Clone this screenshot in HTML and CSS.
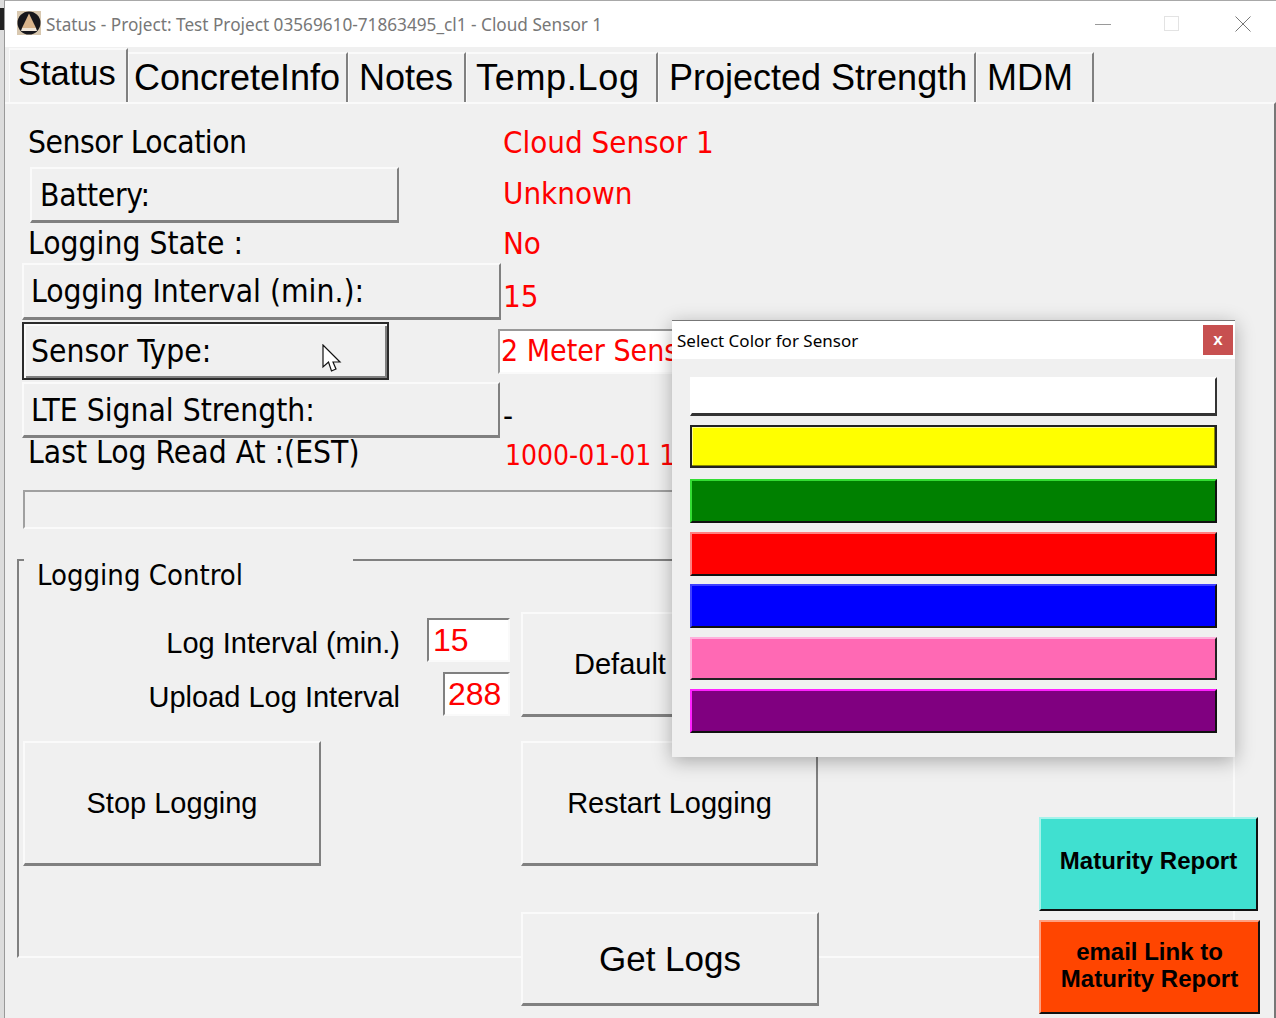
FILE: index.html
```html
<!DOCTYPE html>
<html lang="en">
<head>
    <meta charset="UTF-8" />
    <title>Status - Project: Test Project 03569610-71863495_cl1 - Cloud Sensor 1</title>
    <link rel="stylesheet" href="styles.css">
</head>
<body>
<div class="desktop-edge"><span class="edge-mark"></span></div>
<div class="window">

    <!-- Title bar -->
    <header class="titlebar">
        <svg class="app-icon" width="24" height="24" viewBox="0 0 24 24">
            <rect width="24" height="24" fill="#d8c8b0"/>
            <circle cx="12" cy="12" r="11.5" fill="#17171c"/>
            <path d="M12 2.5 L19 17 H5 Z" fill="#d9b48c"/>
            <path d="M5 17 H19 L20 20 H4 Z" fill="#f1e7da"/>
        </svg>
        <span class="title-text">Status - Project: Test Project 03569610-71863495_cl1 - Cloud Sensor 1</span>
        <div class="window-controls">
            <svg class="ctrl-min" width="18" height="16" viewBox="0 0 18 16"><path d="M1 8.5 H17" stroke="#9a9a9a" fill="none"/></svg>
            <svg width="16" height="16" viewBox="0 0 16 16"><rect x="0.5" y="0.5" width="14" height="14" stroke="#e3e3e3" fill="none"/></svg>
            <svg width="16" height="16" viewBox="0 0 16 16"><path d="M0.5 0.5 L15.5 15.5 M15.5 0.5 L0.5 15.5" stroke="#777" fill="none"/></svg>
        </div>
    </header>

    <!-- Tabs -->
    <nav class="tabs">
        <div class="tab tab-active tab-status">Status</div>
        <div class="tab tab-concrete">ConcreteInfo</div>
        <div class="tab tab-notes">Notes</div>
        <div class="tab tab-temp">Temp.Log</div>
        <div class="tab tab-projected">Projected Strength</div>
        <div class="tab tab-mdm">MDM</div>
    </nav>

    <main class="panel">

        <!-- Sensor status -->
        <section class="status-grid">
            <div class="row row-location">
                <div class="plain-label location-label">Sensor Location</div>
                <div class="value">Cloud Sensor 1</div>
            </div>
            <div class="row row-battery">
                <div class="raised-label battery-label">Battery:</div>
                <div class="value value-high">Unknown</div>
            </div>
            <div class="row row-state">
                <div class="plain-label">Logging State :</div>
                <div class="value">No</div>
            </div>
            <div class="row row-interval">
                <div class="raised-label interval-label">Logging Interval (min.):</div>
                <div class="value value-low">15</div>
            </div>
            <div class="row row-type">
                <div class="raised-label type-label">Sensor Type:
                    <svg class="cursor" width="20" height="29" viewBox="0 0 20 29">
                        <path d="M1 1 V23 L6.5 18 L9.5 27 L14 25 L11 18 H18 Z" fill="#fff" stroke="#111" stroke-width="1.2"/>
                    </svg>
                </div>
                <div class="type-field">2 Meter Sensor</div>
            </div>
            <div class="row row-signal">
                <div class="raised-label signal-label">LTE Signal Strength:</div>
                <div class="value value-low value-dash">-</div>
            </div>
            <div class="row row-read">
                <div class="plain-label">Last Log Read At :(EST)</div>
                <div class="value value-small">1000-01-01 12:00:00</div>
            </div>
        </section>

        <div class="progress-box"></div>

        <!-- Logging Control group -->
        <section class="group">
            <div class="group-title">Logging Control</div>
            <div class="group-body">
                <div class="col-left">
                    <div class="log-row">
                        <label class="log-label">Log Interval (min.)</label>
                        <div class="log-input input-wide">15</div>
                    </div>
                    <div class="log-row">
                        <label class="log-label">Upload Log Interval</label>
                        <div class="log-input input-narrow">288</div>
                    </div>
                    <button class="btn btn-stop">Stop Logging</button>
                </div>
                <div class="col-mid">
                    <button class="btn btn-default">Default</button>
                    <button class="btn btn-restart">Restart Logging</button>
                    <button class="btn btn-get">Get Logs</button>
                </div>
                <div class="col-right">
                    <button class="btn-report report-teal">Maturity Report</button>
                    <button class="btn-report report-orange">email Link to<br>Maturity Report</button>
                </div>
            </div>
        </section>
    </main>

    <!-- Color dialog -->
    <div class="dialog">
        <div class="dialog-title">
            <span>Select Color for Sensor</span>
            <button class="dialog-close">x</button>
        </div>
        <div class="dialog-body">
            <button class="swatch swatch-white"></button>
            <button class="swatch swatch-yellow"></button>
            <button class="swatch swatch-green"></button>
            <button class="swatch swatch-red"></button>
            <button class="swatch swatch-blue"></button>
            <button class="swatch swatch-pink"></button>
            <button class="swatch swatch-purple"></button>
        </div>
    </div>
</div>
</body>
</html>
```

FILE: styles.css
```css
html, body {
  margin: 0;
  padding: 0;
  height: 1018px;
  overflow: hidden;
  background: #f0f0f0;
  display: flex;
  font-family: "Liberation Sans", Arial, sans-serif;
  color: #000;
}

.desktop-edge {
  width: 4px;
  background: #dcdcdc;
  flex-shrink: 0;
}
.edge-mark {
  display: block;
  width: 4px;
  height: 22px;
  margin-top: 8px;
  background: #222;
}

.window {
  position: relative;
  width: 1272px;
  height: 1018px;
  box-sizing: border-box;
  border-left: 1px solid #999;
  background: #f0f0f0;
}

/* Title bar */
.titlebar {
  height: 47px;
  box-sizing: border-box;
  background: #fff;
  border-top: 1px solid #a8a8a8;
  display: flex;
  align-items: center;
  padding-left: 12px;
}
.app-icon {
  margin: -2px 5px 0 0;
}
.title-text {
  font-family: "Noto Sans", sans-serif;
  font-size: 17.2px;
  color: #777;
}
.window-controls {
  margin-left: auto;
  display: flex;
  align-items: center;
  gap: 55px;
  padding-right: 25px;
}
.ctrl-min {
  margin-right: -3px;
}

/* Tabs */
.tabs {
  height: 55px;
  box-sizing: border-box;
  display: flex;
  align-items: flex-end;
  padding-left: 4px;
}
.tab {
  height: 50px;
  box-sizing: border-box;
  border-top: 2px solid #fafafa;
  border-left: 1px solid #fafafa;
  border-right: 2px solid #808080;
  font-size: 36px;
  line-height: 48px;
  padding-left: 8px;
  white-space: nowrap;
}
.tab-active {
  height: 54px;
  line-height: 46px;
  font-size: 34.5px;
}
.tab-status { width: 119px; }
.tab-concrete { width: 220px; padding-left: 5px; }
.tab-notes { width: 118px; padding-left: 10px; }
.tab-temp { width: 192px; padding-left: 9px; letter-spacing: 0.7px; }
.tab-projected { width: 318px; padding-left: 10px; }
.tab-mdm { width: 118px; padding-left: 10px; }

/* Main panel */
.panel {
  height: 916px;
  box-sizing: border-box;
  border-top: 2px solid #fafafa;
  border-right: 2px solid #777;
  padding: 0 0 0 12px;
  overflow: visible;
}

.status-grid {
  width: 1100px;
  padding: 12px 0 0 5px;
}
.row {
  display: grid;
  grid-template-columns: 476px 1fr;
  align-items: center;
}
.row-location { height: 51px; }
.row-battery { height: 56px; }
.row-state { height: 40px; }
.row-interval { height: 57px; margin-bottom: 2px; }
.row-type { height: 58px; margin-bottom: 2px; }
.row-signal { height: 56px; }
.row-read { height: 34px; }

.plain-label {
  font-family: "DejaVu Sans", sans-serif;
  font-stretch: condensed;
  font-size: 31.5px;
  padding-left: 6px;
  white-space: nowrap;
}
.location-label {
  letter-spacing: -0.5px;
}
.row-read .plain-label {
  margin-top: -6px;
}
.raised-label {
  font-family: "DejaVu Sans", sans-serif;
  font-stretch: condensed;
  font-size: 31.5px;
  position: relative;
  height: 100%;
  box-sizing: border-box;
  display: flex;
  align-items: center;
  padding-left: 7px;
  background: #f0f0f0;
  border: 2px solid;
  border-bottom-width: 3px;
  border-color: #fafafa #808080 #808080 #fafafa;
  white-space: nowrap;
}
.battery-label { width: 369px; margin-left: 8px; padding-left: 8px; letter-spacing: -0.3px; }
.interval-label { width: 479px; }
.type-label {
  width: 367px;
  border-width: 2px;
  border-color: #2b2b2b;
  box-shadow: inset 2px 2px #fafafa, inset -2px -2px #808080;
}
.signal-label { width: 478px; }
.cursor {
  position: absolute;
  left: 298px;
  top: 20px;
}

.value {
  font-family: "DejaVu Sans", sans-serif;
  font-stretch: condensed;
  font-size: 31px;
  color: #f00;
  padding-left: 5px;
  white-space: nowrap;
}
.value-high {
  margin-top: -4px;
}
.value-low {
  padding-top: 9px;
}
.value-dash {
  color: #000;
}
.value-small {
  font-size: 28px;
  padding-left: 7px;
}
.type-field {
  font-family: "DejaVu Sans", sans-serif;
  font-stretch: condensed;
  font-size: 30px;
  color: #f00;
  background: #fff;
  width: 300px;
  height: 45px;
  line-height: 39px;
  box-sizing: border-box;
  border: 2px solid;
  border-color: #999 #fafafa #fafafa #999;
  padding-left: 1px;
  white-space: nowrap;
}

.progress-box {
  width: 1100px;
  height: 39px;
  box-sizing: border-box;
  margin: 18px 0 30px 6px;
  border: 2px solid;
  border-color: #a0a0a0 #fafafa #fafafa #a0a0a0;
}

/* Logging Control */
.group {
  width: 1218px;
  height: 399px;
  box-sizing: border-box;
  border: 2px solid;
  border-color: #808080 #fafafa #fafafa #808080;
}
.group-title {
  width: 316px;
  height: 32px;
  margin: -2px 0 0 5px;
  padding-left: 13px;
  background: #f0f0f0;
  font-family: "DejaVu Sans", sans-serif;
  font-stretch: condensed;
  font-size: 29px;
  line-height: 32px;
  white-space: nowrap;
}
.group-body {
  display: flex;
  align-items: flex-start;
  padding: 21px 0 0 4px;
}
.col-left {
  width: 498px;
  flex-shrink: 0;
  padding-top: 6px;
  box-sizing: border-box;
}
.col-mid {
  width: 298px;
  flex-shrink: 0;
  display: flex;
  flex-direction: column;
  gap: 24px;
}
.col-right {
  margin-left: 220px;
  flex-shrink: 0;
  padding-top: 205px;
  display: flex;
  flex-direction: column;
  gap: 9px;
}

.log-row {
  display: flex;
  align-items: center;
  height: 44px;
  width: 487px;
  margin-bottom: 10px;
}
.log-label {
  width: 377px;
  padding-top: 6px;
  text-align: right;
  font-size: 29px;
  white-space: nowrap;
}
.log-input {
  margin-left: auto;
  height: 44px;
  box-sizing: border-box;
  background: #fff;
  border: 2px solid;
  border-color: #808080 #fafafa #fafafa #808080;
  color: #f00;
  font-size: 32px;
  line-height: 40px;
  padding-left: 4px;
}
.input-wide { width: 83px; }
.input-narrow { width: 67px; padding-left: 3px; }

.btn {
  font-family: "Liberation Sans", Arial, sans-serif;
  background: #f0f0f0;
  color: #000;
  border: 2px solid;
  border-bottom-width: 3px;
  border-color: #fafafa #808080 #808080 #fafafa;
  font-size: 29px;
  padding: 0;
  display: block;
}
.btn-stop { width: 298px; height: 125px; margin-top: 25px; }
.btn-default {
  height: 105px;
  text-align: left;
  padding-left: 51px;
}
.btn-restart { height: 125px; width: 297px; }
.btn-get {
  height: 94px;
  margin-top: 22px;
  font-size: 35px;
}

.btn-report {
  font-family: "Liberation Sans", Arial, sans-serif;
  font-weight: bold;
  font-size: 24px;
  line-height: 27px;
  color: #000;
  height: 94px;
  width: 219px;
  padding: 0 0 4px;
  border: 2px solid;
}
.report-teal {
  padding-bottom: 8px;
  background: #40e0d0;
  border-color: #a5f3eb #111 #111 #a5f3eb;
}
.report-orange {
  background: #ff4500;
  border-color: #ffa080 #111 #111 #ffa080;
  width: 221px;
}

/* Color dialog */
.dialog {
  position: absolute;
  left: 667px;
  top: 320px;
  width: 563px;
  height: 437px;
  background: #f0f0f0;
  box-shadow: 0 4px 18px rgba(0, 0, 0, 0.3);
  border-top: 1px solid #777;
  box-sizing: border-box;
}
.dialog-title {
  height: 38px;
  background: #fff;
  display: flex;
  align-items: center;
  justify-content: space-between;
  font-family: "Noto Sans", sans-serif;
  font-size: 17px;
  padding-left: 5px;
  padding-right: 2px;
}
.dialog-close {
  width: 30px;
  height: 30px;
  border: none;
  background: #c75050;
  color: #fff;
  font-family: "Liberation Sans", Arial, sans-serif;
  font-weight: bold;
  font-size: 17px;
  padding: 0;
}
.dialog-body {
  padding: 18px 18px 0;
  display: flex;
  flex-direction: column;
  gap: 9px;
}
.swatch {
  display: block;
  width: 527px;
  height: 44px;
  padding: 0;
  border: 2px solid;
}
.swatch-white {
  height: 39px;
  background: #fff;
  border-bottom-width: 3px;
  border-color: #fff #333 #333 #fff;
}
.swatch-yellow {
  height: 43px;
  background: #ff0;
  border-color: #222;
  box-shadow: inset -1px -1px #8a8a00, inset 1px 1px #ffff90;
  margin-bottom: 2px;
}
.swatch-green {
  background: #008000;
  border-color: #33dd33 #111 #111 #33dd33;
}
.swatch-red {
  background: #f00;
  border-color: #ff8080 #111 #111 #ff8080;
}
.swatch-blue {
  margin-top: -1px;
  background: #00f;
  border-color: #4040ff #111 #111 #4040ff;
}
.swatch-pink {
  height: 43px;
  background: #ff69b4;
  border-color: #ffb0dc #222 #222 #ffb0dc;
}
.swatch-purple {
  background: #800080;
  border-color: #ff20ff #111 #111 #ff20ff;
}
```
